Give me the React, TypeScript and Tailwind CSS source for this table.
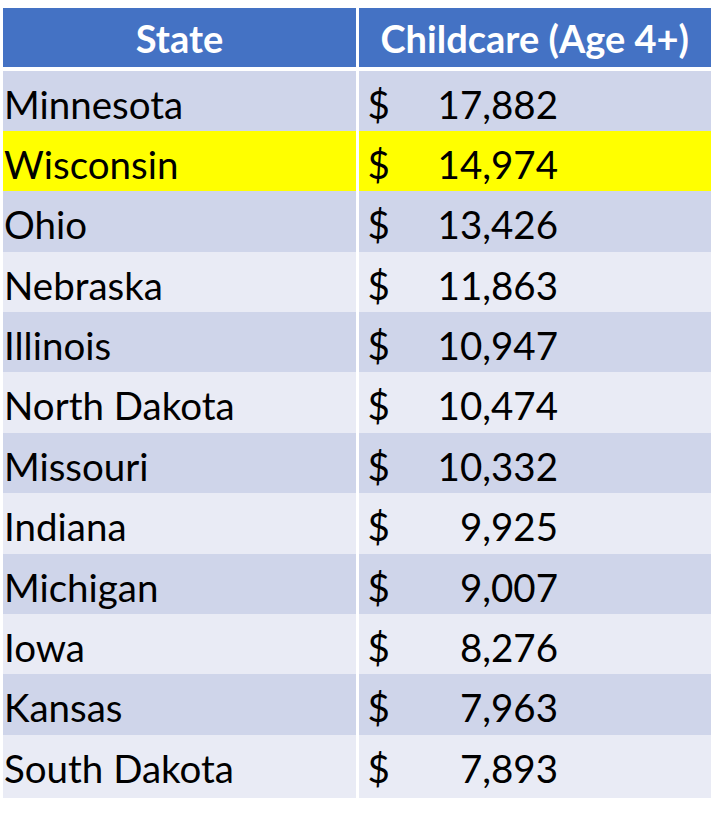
const rows: [string, string][] = [
  ['Minnesota', '17,882'],
  ['Wisconsin', '14,974'],
  ['Ohio', '13,426'],
  ['Nebraska', '11,863'],
  ['Illinois', '10,947'],
  ['North Dakota', '10,474'],
  ['Missouri', '10,332'],
  ['Indiana', '9,925'],
  ['Michigan', '9,007'],
  ['Iowa', '8,276'],
  ['Kansas', '7,963'],
  ['South Dakota', '7,893'],
];

function rowBg(i: number, name: string) {
  if (name === 'Wisconsin') return 'bg-[#ffff00]';
  return i % 2 === 0 ? 'bg-[#cfd5ea]' : 'bg-[#e9ebf5]';
}

export default function App() {
  return (
    <div className="min-h-[824px] w-[717px] bg-white pt-[8px] pl-[3px] font-['Lato','Liberation_Sans',sans-serif] text-black">
      <div className="w-[708px]">
        <div className="grid h-[57px] grid-cols-[353px_1fr] gap-x-[2.5px] bg-white text-[38px] font-bold text-white">
          <div className="flex items-center justify-center bg-[#4472c4] pt-[2px]">State</div>
          <div className="flex items-center justify-center bg-[#4472c4] pt-[2px]">Childcare (Age 4+)</div>
        </div>
        <div className="mt-[5.5px] flex flex-col gap-y-[2px]">
          {rows.map(([name, amount], i) => (
            <div key={name} className="grid h-[58.4px] grid-cols-[353px_1fr] gap-x-[2.5px] text-[38.5px]">
              <div className={`flex items-center pl-[1px] pt-[5px] ${rowBg(i, name)}`}>{name}</div>
              <div className={`flex items-center pl-[9px] pr-[153px] pt-[5px] ${rowBg(i, name)}`}>
                <span>$</span>
                <span className="ml-auto">{amount}</span>
              </div>
            </div>
          ))}
        </div>
      </div>
    </div>
  );
}
